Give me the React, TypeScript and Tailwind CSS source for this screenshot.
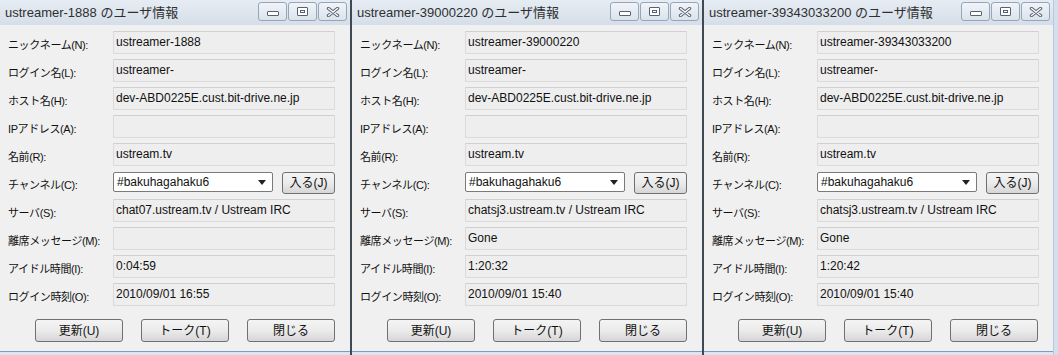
import React from "react";

type Info = {
  nick: string;
  login: string;
  host: string;
  ip: string;
  name: string;
  channel: string;
  server: string;
  away: string;
  idle: string;
  loginTime: string;
};

const USERS: Info[] = [
  { nick: "ustreamer-1888", login: "ustreamer-", host: "dev-ABD0225E.cust.bit-drive.ne.jp", ip: "", name: "ustream.tv", channel: "#bakuhagahaku6", server: "chat07.ustream.tv / Ustream IRC", away: "", idle: "0:04:59", loginTime: "2010/09/01 16:55" },
  { nick: "ustreamer-39000220", login: "ustreamer-", host: "dev-ABD0225E.cust.bit-drive.ne.jp", ip: "", name: "ustream.tv", channel: "#bakuhagahaku6", server: "chatsj3.ustream.tv / Ustream IRC", away: "Gone", idle: "1:20:32", loginTime: "2010/09/01 15:40" },
  { nick: "ustreamer-39343033200", login: "ustreamer-", host: "dev-ABD0225E.cust.bit-drive.ne.jp", ip: "", name: "ustream.tv", channel: "#bakuhagahaku6", server: "chatsj3.ustream.tv / Ustream IRC", away: "Gone", idle: "1:20:42", loginTime: "2010/09/01 15:40" },
];

const font = "font-['Liberation_Sans','Noto_Sans_CJK_JP',sans-serif]";

function CaptionButton({ kind }: { kind: "min" | "max" | "close" }) {
  return (
    <div className="w-[29px] h-[19px] rounded-[3px] border border-[#95a5ba] bg-gradient-to-b from-[#f1f4f8] to-[#dbe3ec] flex items-center justify-center">
      {kind === "min" && <div className="w-[12px] h-[5px] border border-[#566273] bg-white rounded-[1px] mt-[3px]" />}
      {kind === "max" && (
        <div className="w-[11px] h-[9px] border border-[#566273] bg-white rounded-[1px] flex items-center justify-center">
          <div className="w-[5px] h-[3px] border border-[#566273]" />
        </div>
      )}
      {kind === "close" && (
        <svg width="14" height="10" viewBox="0 0 14 10">
          <path d="M2.5 1.5 L11.5 8.5 M11.5 1.5 L2.5 8.5" stroke="#566273" strokeWidth="3.4" strokeLinecap="round" />
          <path d="M2.5 1.5 L11.5 8.5 M11.5 1.5 L2.5 8.5" stroke="#ffffff" strokeWidth="1.4" strokeLinecap="round" />
        </svg>
      )}
    </div>
  );
}

function Row({ label, children }: { label: string; children: React.ReactNode }) {
  return (
    <div className="flex h-[23px] mb-[5px]">
      <div className="w-[113px] shrink-0 pl-[8px] pt-[7px] text-[11px] leading-[14px] tracking-[-0.4px] text-[#111] whitespace-nowrap">{label}</div>
      {children}
    </div>
  );
}

function Field({ value }: { value: string }) {
  return (
    <div className="w-[222px] h-[23px] bg-[#eeeeee] border border-[#dadada] border-t-[#d0d0d0] px-[2px] pt-[3px] text-[12px] leading-[14px] text-[#111] whitespace-nowrap overflow-hidden">
      {value}
    </div>
  );
}

function Btn({ label, w, h }: { label: string; w: string; h: string }) {
  return (
    <div className={`${w} ${h} rounded-[3px] border border-[#707070] bg-gradient-to-b from-[#f4f4f4] via-[#ebebeb] to-[#d6d6d6] flex items-center justify-center text-[12px] leading-[14px] text-[#111]`}>
      {label}
    </div>
  );
}

function UserWindow({ u, className }: { u: Info; className: string }) {
  return (
    <div className={`flex flex-col h-[355px] ${className}`}>
      <div className="h-[25px] bg-gradient-to-b from-[#e6ecf3] to-[#d5dee8] flex items-center justify-between pl-[5px] pr-[3px]">
        <span className="text-[13px] leading-[16px] text-[#2f2f2f] whitespace-nowrap">{u.nick} のユーザ情報</span>
        <div className="flex gap-[1px] -mt-[2px]">
          <CaptionButton kind="min" />
          <CaptionButton kind="max" />
          <CaptionButton kind="close" />
        </div>
      </div>
      <div className="flex-1 bg-[#f0f0f0] pt-[6px] flex flex-col">
        <Row label="ニックネーム(N):"><Field value={u.nick} /></Row>
        <Row label="ログイン名(L):"><Field value={u.login} /></Row>
        <Row label="ホスト名(H):"><Field value={u.host} /></Row>
        <Row label="IPアドレス(A):"><Field value={u.ip} /></Row>
        <Row label="名前(R):"><Field value={u.name} /></Row>
        <Row label="チャンネル(C):">
          <div className="w-[222px] flex items-start gap-[9px] pt-[1px]">
            <div className="w-[160px] h-[20px] bg-white border border-[#7a7a7a] rounded-[2px] flex items-center justify-between pl-[3px] pr-[6px] text-[12px] leading-[14px] text-[#111]">
              <span>{u.channel}</span>
              <svg width="8" height="5" viewBox="0 0 8 5"><path d="M0 0 H8 L4 5 Z" fill="#222" /></svg>
            </div>
            <Btn label="入る(J)" w="w-[53px]" h="h-[22px]" />
          </div>
        </Row>
        <Row label="サーバ(S):"><Field value={u.server} /></Row>
        <Row label="離席メッセージ(M):"><Field value={u.away} /></Row>
        <Row label="アイドル時間(I):"><Field value={u.idle} /></Row>
        <Row label="ログイン時刻(O):"><Field value={u.loginTime} /></Row>
        <div className="flex justify-end gap-[18px] pr-[15px] mt-[8px]">
          <Btn label="更新(U)" w="w-[88px]" h="h-[23px]" />
          <Btn label="トーク(T)" w="w-[88px]" h="h-[23px]" />
          <Btn label="閉じる" w="w-[88px]" h="h-[23px]" />
        </div>
      </div>
      <div className="h-[4px] bg-[#dde6f0] border-t border-[#7d9cc4]" />
    </div>
  );
}

export default function App() {
  return (
    <div className={`w-[1058px] h-[355px] overflow-hidden flex bg-[#dde6f0] ${font}`}>
      <UserWindow u={USERS[0]} className="w-[350px]" />
      <UserWindow u={USERS[1]} className="w-[352px] border-l-2 border-[#3f4853]" />
      <UserWindow u={USERS[2]} className="w-[351px] border-l-2 border-[#3f4853]" />
      <div className="w-[5px] h-[355px] bg-[#d3dfec] border-l border-[#b9c9dc]" />
    </div>
  );
}
